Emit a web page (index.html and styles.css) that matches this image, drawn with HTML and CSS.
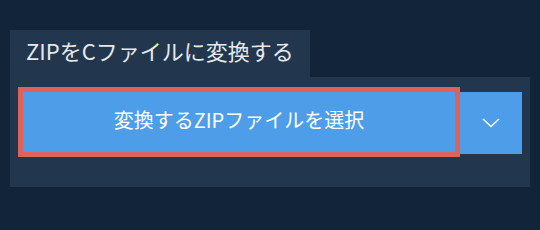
FILE: index.html
```html
<!DOCTYPE html>
<html lang="ja">
<head>
    <meta charset="UTF-8">
    <meta name="viewport" content="width=device-width, initial-scale=1.0">
    <title>ZIPをCファイルに変換する</title>
    <link rel="stylesheet" href="styles.css">
</head>
<body>
    <main id="converter">
        <h1 class="tab-title">ZIPをCファイルに変換する</h1>
        <section class="panel">
            <div class="button-group">
                <button class="select-button">変換するZIPファイルを選択</button>
                <button class="dropdown-button" aria-label="その他の選択肢">
                    <svg width="18" height="10" viewBox="0 0 18 10">
                        <polyline points="1,1 9,8.5 17,1" fill="none" stroke="#ffffff" stroke-width="1.5"/>
                    </svg>
                </button>
            </div>
        </section>
    </main>
</body>
</html>
```

FILE: styles.css
```css
body {
    font-family: 'Noto Sans CJK JP', 'Noto Sans', sans-serif;
    background-color: #11243a;
    margin: 0;
    padding: 0;
}

#converter {
    padding: 30px 10px 0 10px;
}

.tab-title {
    display: inline-block;
    box-sizing: border-box;
    width: 300px;
    height: 47px;
    margin: 0;
    padding: 0 16px;
    background-color: #22374d;
    color: #e6e9ec;
    font-size: 22px;
    font-weight: normal;
    line-height: 40px;
    vertical-align: top;
}

.panel {
    box-sizing: border-box;
    width: 520px;
    height: 110px;
    padding: 10px 8px;
    background-color: #22374d;
}

.button-group {
    display: flex;
    align-items: flex-start;
}

.select-button {
    box-sizing: border-box;
    width: 442px;
    height: 70px;
    border: 5px solid #e0605a;
    background-color: #4d9de8;
    color: #ffffff;
    font-family: inherit;
    font-size: 20px;
    line-height: 1;
    cursor: pointer;
    padding: 0 0 4px 0;
}

.dropdown-button {
    width: 62px;
    height: 62px;
    margin-top: 5px;
    border: none;
    background-color: #4d9de8;
    cursor: pointer;
    display: flex;
    align-items: center;
    justify-content: center;
    padding: 0;
}
```
